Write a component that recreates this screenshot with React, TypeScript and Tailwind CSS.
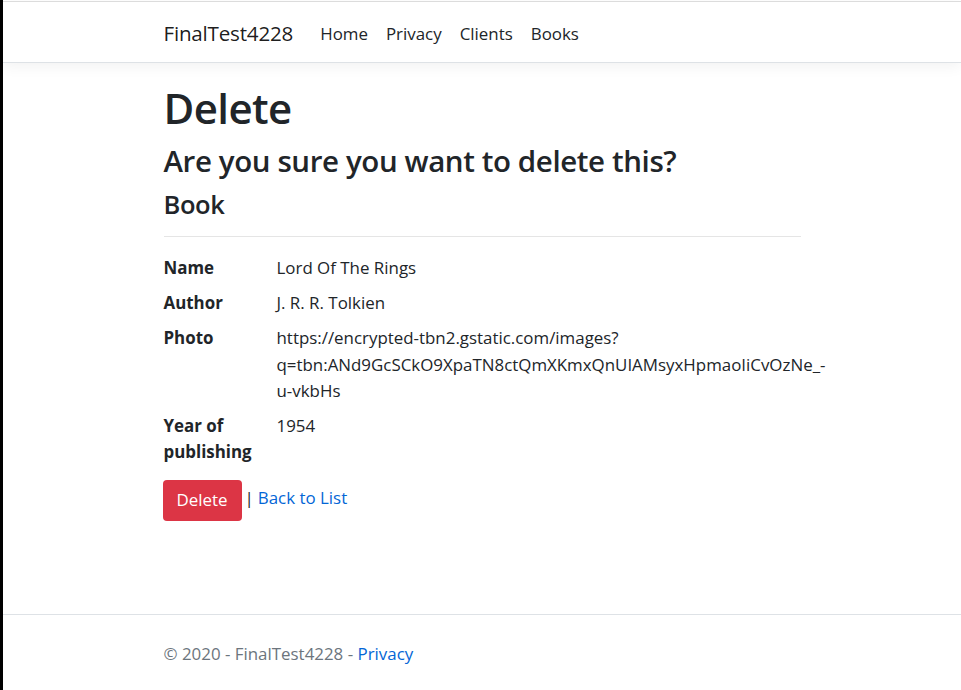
import React from "react";

export default function App() {
  const font = { fontFamily: '"Open Sans", "Noto Sans", sans-serif' };
  return (
    <div className="flex min-h-[690px] h-[690px] overflow-hidden bg-white text-[#212529]" style={font}>
      <div className="w-[3px] shrink-0 bg-black" />
      <div className="flex flex-1 flex-col">
        <div className="h-px bg-white" />
        <header className="relative z-10 border-t border-b border-t-[#dcdcdc] border-b-[#dee2e6] bg-white shadow-[0_4px_13px_rgba(0,0,0,0.05)]">
          <nav className="mx-auto flex h-[60px] w-[637px] items-center pt-[3px]">
            <span className="mr-[18px] text-[20.6px] leading-[33px] tracking-[-0.2px] text-black/90">FinalTest4228</span>
            <ul className="flex items-center text-[16.9px] leading-[26px] text-[#212529]">
              <li className="px-[9px]">Home</li>
              <li className="px-[9px]">Privacy</li>
              <li className="px-[9px]">Clients</li>
              <li className="px-[9px]">Books</li>
            </ul>
          </nav>
        </header>
        <main className="mx-auto w-[637px] pt-[17px]">
          <h1 className="mb-[9px] pt-[2px] text-[42px] font-semibold leading-[51px] tracking-[-0.6px]">Delete</h1>
          <h3 className="mb-[9px] text-[29.5px] font-semibold leading-[37px] tracking-[-0.4px]">Are you sure you want to delete this?</h3>
          <div>
            <h4 className="mb-[9px] text-[25.5px] font-semibold leading-[32px] tracking-[-0.4px]">Book</h4>
            <hr className="mt-[16px] mb-[18px] border-t border-[#e5e5e5]" />
            <dl className="grid grid-cols-[113px_1fr] text-[16.9px] leading-[26.4px]">
              <dt className="font-bold">Name</dt>
              <dd className="mb-[8.4px]">Lord Of The Rings</dd>
              <dt className="font-bold">Author</dt>
              <dd className="mb-[9px]">J. R. R. Tolkien</dd>
              <dt className="font-bold">Photo</dt>
              <dd className="mb-[8.6px] whitespace-normal">
                https://encrypted-tbn2.gstatic.com/images?q=tbn:ANd9GcSCkO9XpaTN8ctQmXKmxQnUIAMsyxHpmaoIiCvOzNe_-u-vkbHs
              </dd>
              <dt className="font-bold">Year of publishing</dt>
              <dd className="mb-[9px]">1954</dd>
            </dl>
          </div>
          <div className="mt-[14px] flex items-center text-[16.9px] leading-[26.4px]">
            <button className="-ml-px h-[41px] w-[79px] rounded-[4px] bg-[#dc3545] text-white">Delete</button>
            <span className="ml-[3px] -mt-[4px]">|</span>
            <a className="ml-[4px] -mt-[4px] text-[#0366d6]">Back to List</a>
          </div>
        </main>
        <footer className="mt-auto mb-[3px] border-t border-[#dee2e6]">
          <div className="mx-auto w-[637px] pt-[6px] text-[16.9px] leading-[66px] text-[#6c757d]">
            © 2020 - FinalTest4228 - <a className="text-[#0366d6]">Privacy</a>
          </div>
        </footer>
      </div>
    </div>
  );
}
